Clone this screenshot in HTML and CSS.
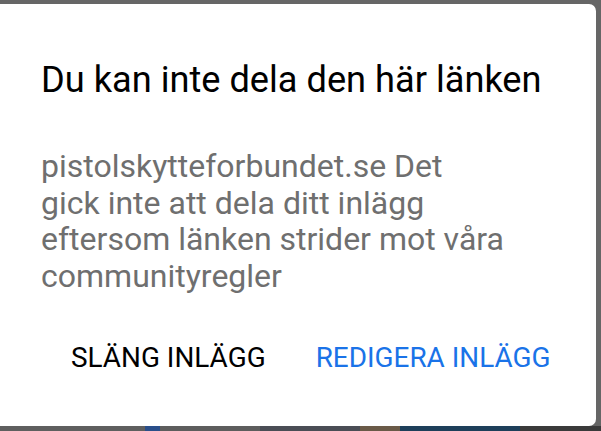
FILE: index.html
```html
<!DOCTYPE html>
<html>
<head>
<meta charset="utf-8">
<link rel="stylesheet" href="styles.css">
</head>
<body>
<div class="screen">
  <div class="dialog">
    <h1 class="title">Du kan inte dela den här länken</h1>
    <p class="message">pistolskytteforbundet.se Det<br>gick inte att dela ditt inlägg eftersom länken strider mot våra communityregler</p>
    <div class="actions">
      <span class="btn btn-discard">SLÄNG INLÄGG</span>
      <span class="btn btn-edit">REDIGERA INLÄGG</span>
    </div>
  </div>
  <div class="backdrop-strip">
    <span class="seg s1"></span><span class="seg s2"></span><span class="seg s3"></span><span class="seg s4"></span><span class="seg s5"></span><span class="seg s6"></span><span class="seg s7"></span>
  </div>
</div>
</body>
</html>
```
FILE: styles.css
```css
html, body {
  margin: 0;
  padding: 0;
  background: #666666;
  overflow: hidden;
}
.screen {
  width: 601px;
  height: 431px;
  padding-top: 4px;
  box-sizing: border-box;
}
.dialog {
  width: 596px;
  height: 422px;
  background: #ffffff;
  border-radius: 0 7px 7px 0;
  box-sizing: border-box;
  padding: 55px 20px 0 41px;
  font-family: Roboto, "Liberation Sans", sans-serif;
}
.title {
  margin: 0;
  font-size: 36.2px;
  font-weight: 400;
  color: #000000;
  line-height: 42px;
}
.message {
  margin: 47px 0 0 0;
  width: 480px;
  font-size: 32px;
  line-height: 36.7px;
  color: #6f6f6f;
}
.actions {
  display: flex;
  gap: 50px;
  margin-top: 47px;
  padding-left: 30px;
}
.btn {
  font-size: 27.9px;
  line-height: 32px;
}
.btn-discard { color: #000000; }
.btn-edit { color: #1a73e8; }
.backdrop-strip {
  display: flex;
  height: 5px;
}
.seg { height: 100%; }
.s1 { width: 145px; background: #5f5f5f; }
.s2 { width: 15px; background: #2a4f8a; }
.s3 { width: 100px; background: #5d5d5d; }
.s4 { width: 100px; background: #4a4d55; }
.s5 { width: 40px; background: #6a5a48; }
.s6 { width: 120px; background: #1e3f5a; }
.s7 { flex: 1; background: #3a3a3a; }
```
